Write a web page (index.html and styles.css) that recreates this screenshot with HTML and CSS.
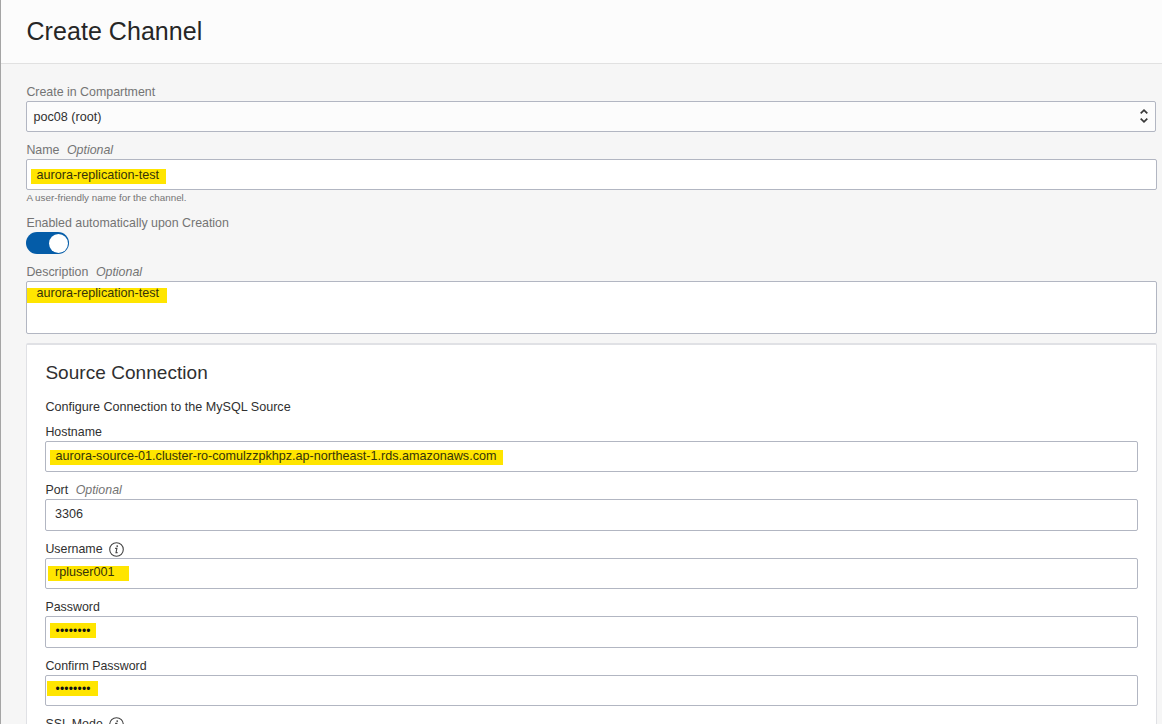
FILE: index.html
```html
<!DOCTYPE html>
<html lang="en">
<head>
<meta charset="utf-8">
<title>Create Channel</title>
<link rel="stylesheet" href="styles.css">
</head>
<body>
<main class="panel">
  <header class="header"><h1 class="title">Create Channel</h1></header>
  <div class="form">
    <div class="group compartment">
      <div class="label muted">Create in Compartment</div>
      <div class="field select"><span class="value">poc08 (root)</span>
        <svg class="chevrons" width="10" height="16" viewBox="0 0 10 16"><path d="M1.7 5.4 5 2.2 8.3 5.4M1.7 10.6 5 13.8 8.3 10.6"/></svg>
      </div>
    </div>
    <div class="group name">
      <div class="label muted">Name<i class="optional">Optional</i></div>
      <div class="field"><span class="mark mark-name">aurora-replication-test</span></div>
      <div class="hint">A user-friendly name for the channel.</div>
    </div>
    <div class="group enabled">
      <div class="label muted wide">Enabled automatically upon Creation</div>
      <div class="toggle"><span class="knob"></span></div>
    </div>
    <div class="group description">
      <div class="label muted">Description<i class="optional">Optional</i></div>
      <div class="field textarea"><span class="mark mark-description">aurora-replication-test</span></div>
    </div>
    <section class="card">
      <h2 class="card-title">Source Connection</h2>
      <p class="card-text">Configure Connection to the MySQL Source</p>
      <div class="group host">
        <div class="label">Hostname</div>
        <div class="field"><span class="mark mark-host">aurora-source-01.cluster-ro-comulzzpkhpz.ap-northeast-1.rds.amazonaws.com</span></div>
      </div>
      <div class="group port">
        <div class="label">Port<i class="optional">Optional</i></div>
        <div class="field tall"><span class="value port-value">3306</span></div>
      </div>
      <div class="group user">
        <div class="label">Username<svg class="info" width="15" height="15" viewBox="0 0 15 15"><circle cx="7.5" cy="7.5" r="6.8"/><path d="M6.1 6.4H7.9L7 10.6H8.6"/><circle class="dot" cx="8.2" cy="4.1" r=".9"/></svg></div>
        <div class="field"><span class="mark mark-user">rpluser001</span></div>
      </div>
      <div class="group password">
        <div class="label">Password</div>
        <div class="field tall"><span class="mark mark-password"><span class="bullets">••••••••</span></span></div>
      </div>
      <div class="group confirm">
        <div class="label">Confirm Password</div>
        <div class="field"><span class="mark mark-confirm"><span class="bullets">••••••••</span></span></div>
      </div>
      <div class="group ssl">
        <div class="label">SSL Mode<svg class="info" width="15" height="15" viewBox="0 0 15 15"><circle cx="7.5" cy="7.5" r="6.8"/><path d="M6.1 6.4H7.9L7 10.6H8.6"/><circle class="dot" cx="8.2" cy="4.1" r=".9"/></svg></div>
      </div>
    </section>
  </div>
</main>
</body>
</html>
```
FILE: styles.css
```css
* { box-sizing: border-box; }
body {
  margin: 0;
  height: 724px;
  overflow: hidden;
  background: #f6f6f6;
  font: 12.6px/16px "Liberation Sans", Arial, sans-serif;
  color: #303030;
}
.panel { height: 724px; overflow: hidden; border-left: 1px solid #a5a5a5; }
.header {
  height: 64px;
  padding: 16px 25.5px 0;
  background: #fcfcfc;
  border-bottom: 1px solid #e1e1e1;
}
.title { margin: 0; font-size: 25px; font-weight: 400; line-height: 31px; letter-spacing: .05px; color: #262626; }
.form { display: flex; flex-direction: column; padding: 20px 5px 0 25px; }
.label { display: flex; align-items: center; height: 17px; padding: 0 0 2px .4px; font-size: 12.4px; white-space: nowrap; }
.muted { color: #747474; }
.optional { margin-left: 7.5px; color: #747474; }
.field {
  display: flex;
  align-items: flex-start;
  height: 31px;
  background: #fff;
  border: 1px solid #b2b6c2;
  border-radius: 2px;
}
.tall { height: 32px; }
.select { justify-content: space-between; align-items: center; margin-right: 1px; padding: 0 6px 0 6.5px; background: #fcfcfc; }
.chevrons { margin-bottom: 1px; fill: none; stroke: #383838; stroke-width: 1.7; }
.name { margin-top: 10px; }
.hint { height: 16px; padding-left: .4px; font-size: 9.8px; line-height: 16px; color: #747474; }
.enabled { margin-top: 8px; }
.wide { padding-bottom: 0; }
.toggle { display: flex; justify-content: flex-end; align-items: center; width: 43px; height: 22px; margin-top: 1px; padding-right: 1px; border-radius: 11px; background: #045ca8; }
.knob { width: 19px; height: 19px; border-radius: 50%; background: #fff; }
.description { margin-top: 10px; }
.textarea { height: 53px; }
.mark { height: 15px; line-height: 13px; white-space: nowrap; background: #ffe500; color: #35330a; }
.mark-name { width: 135px; margin: 9px 0 0 4px; padding-left: 5.5px; }
.mark-description { width: 140px; margin-top: 6px; padding-left: 9.5px; line-height: 11px; }
.mark-host { width: 453px; margin: 8px 0 0 4px; padding-left: 5.5px; }
.mark-user { width: 81px; margin: 7px 0 0 2px; padding-left: 7px; }
.mark-password { width: 46px; margin: 6px 0 0 4px; padding-left: 5.5px; }
.mark-confirm { width: 51px; margin: 5px 0 0 1px; padding-left: 8.5px; }
.bullets { display: block; font-size: 12px; line-height: 17px; letter-spacing: .2px; color: #111; }
.card {
  height: 420px;
  margin-top: 9px;
  padding: 16px 18px 0;
  background: #fff;
  border: 1px solid #e0e1e5;
  border-top-width: 2px;
  border-radius: 2px;
}
.card-title { margin: 0; padding-left: .4px; font-size: 19px; font-weight: 400; line-height: 24px; letter-spacing: .05px; }
.card-text { margin: 14px 0 0; padding-left: .4px; line-height: 16px; }
.host { margin-top: 8px; }
.card .label { height: 18px; padding-bottom: 0; }
.port,
.user,
.password,
.confirm,
.ssl { margin-top: 9px; }
.port-value { padding: 6px 9px; }
.info { margin-left: 6.5px; fill: none; stroke: #444; stroke-width: 1.1; }
.dot { fill: #444; stroke: none; }
```
